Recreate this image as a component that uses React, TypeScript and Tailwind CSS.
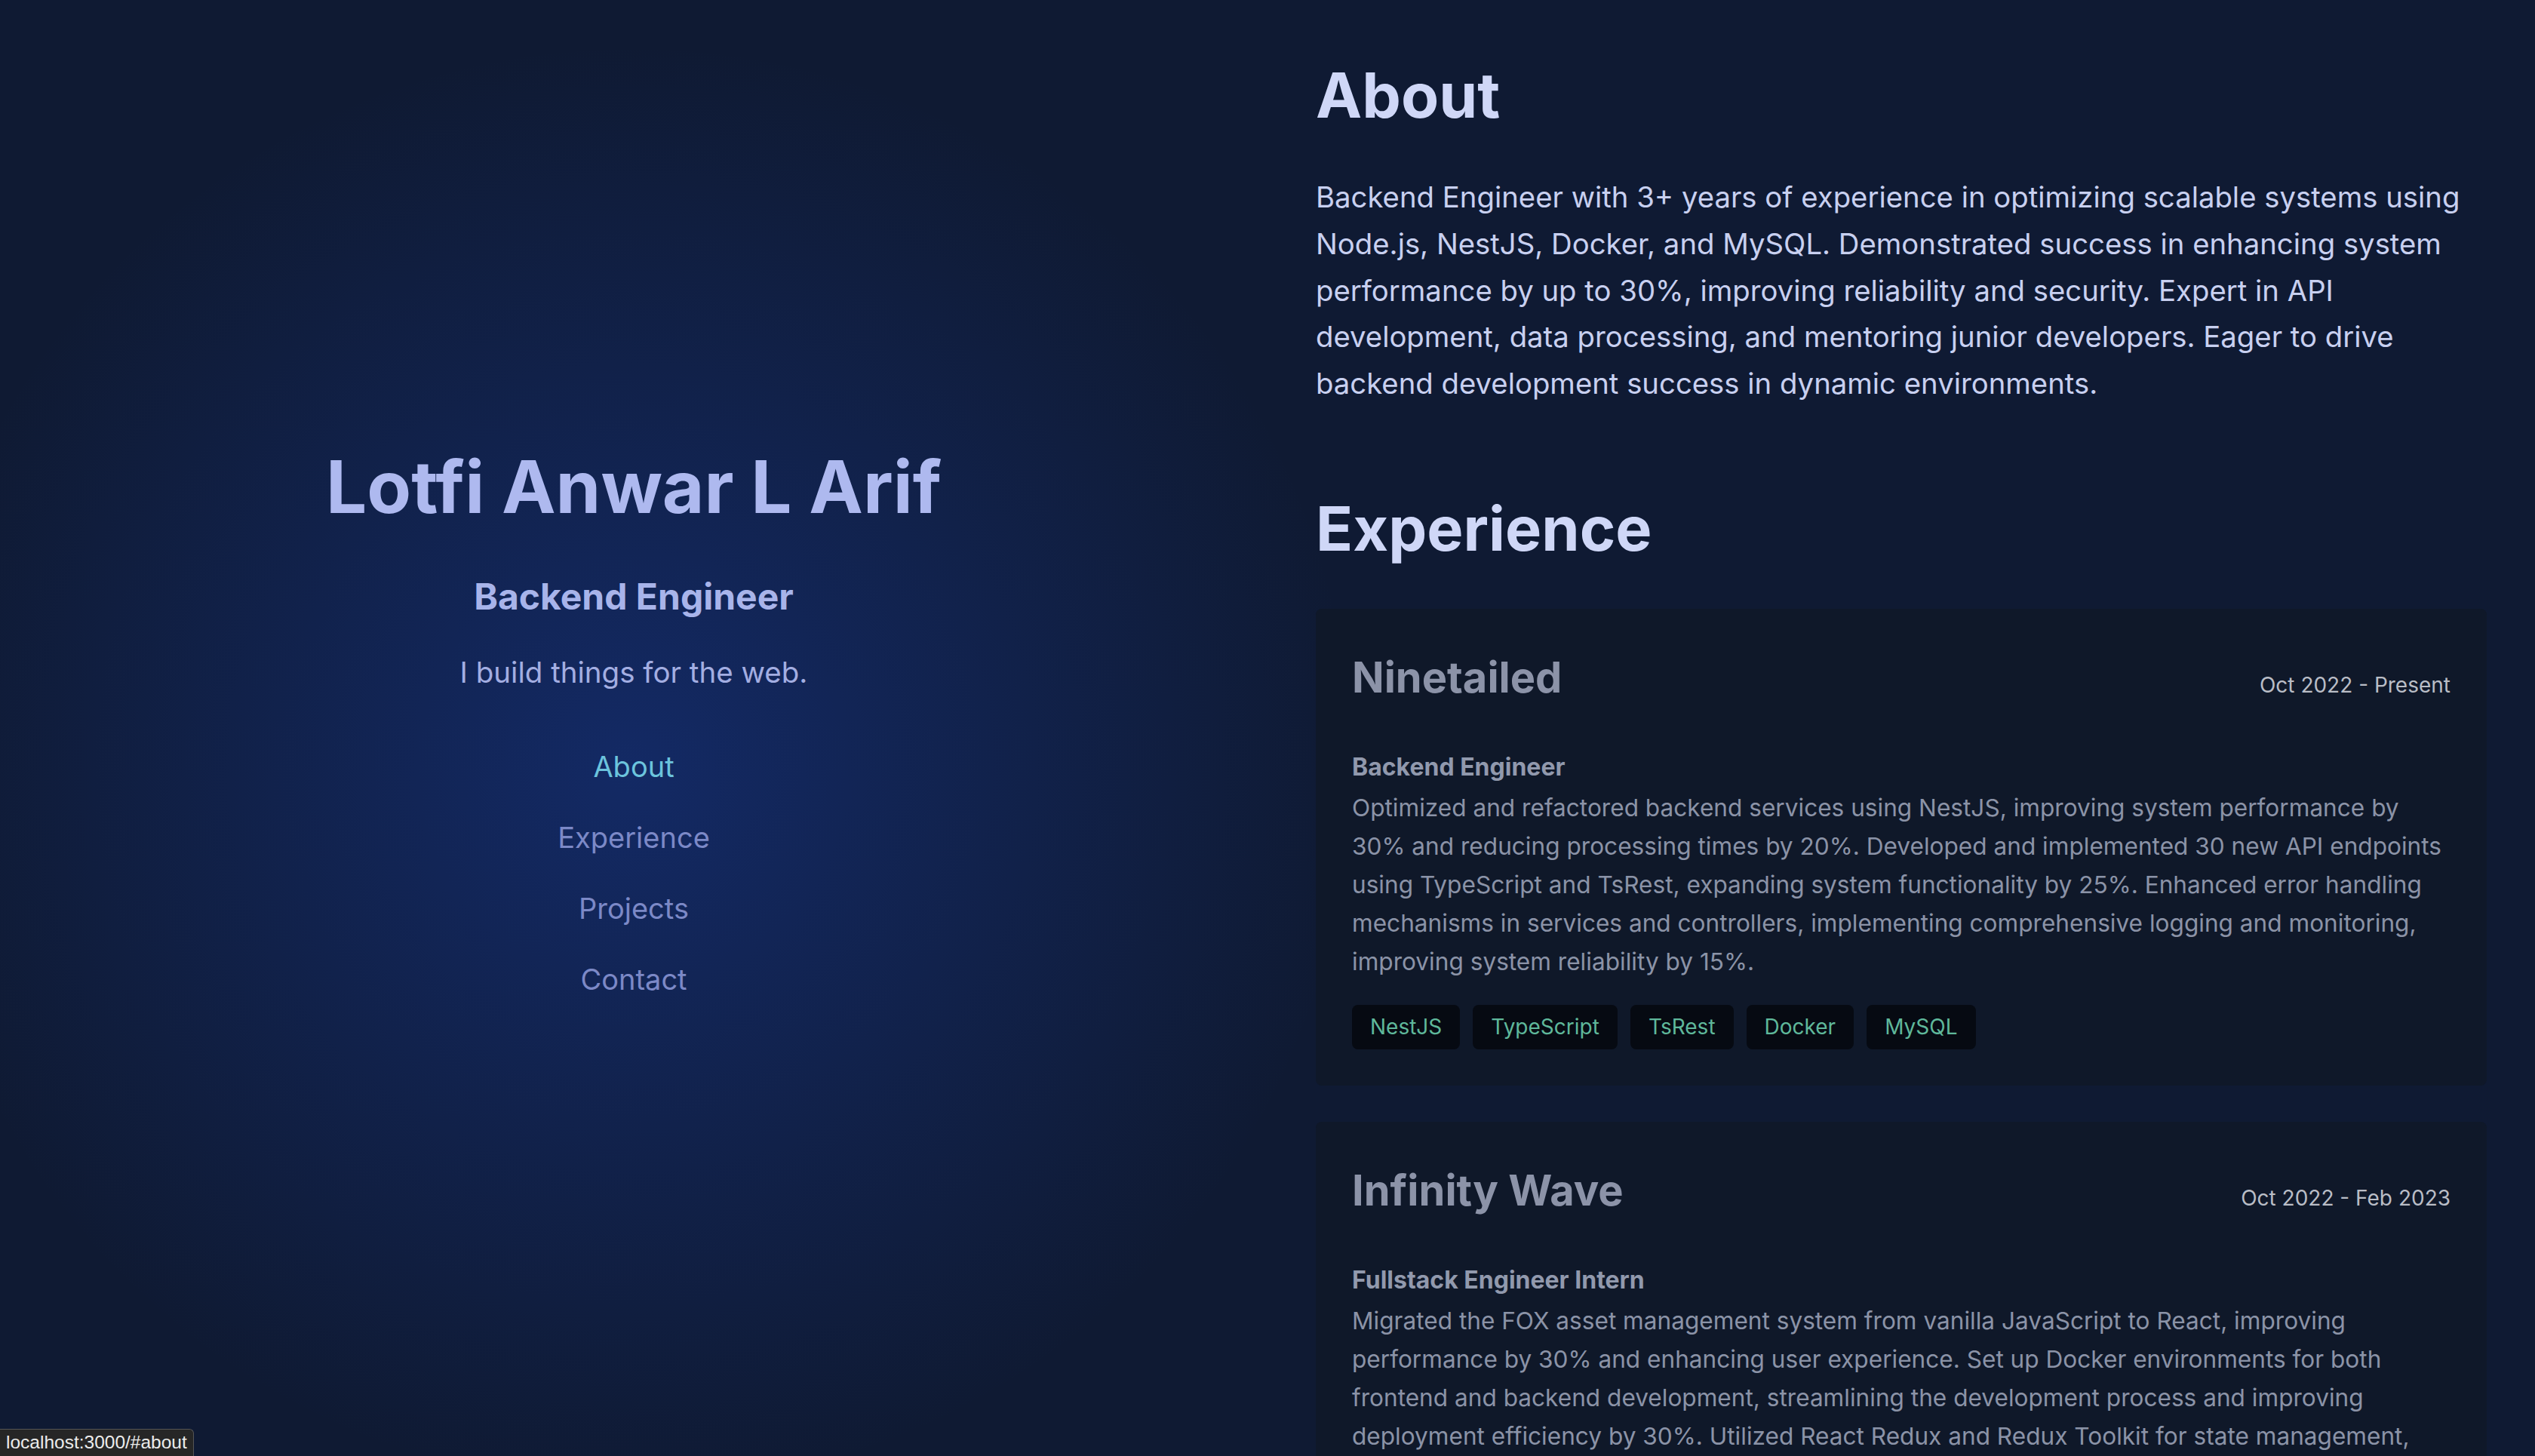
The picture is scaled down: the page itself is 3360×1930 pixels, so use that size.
import React from "react";

type Job = {
  company: string;
  period: string;
  role: string;
  summary: string;
  stack: string[];
};

const jobs: Job[] = [
  {
    company: "Ninetailed",
    period: "Oct 2022 - Present",
    role: "Backend Engineer",
    summary:
      "Optimized and refactored backend services using NestJS, improving system performance by 30% and reducing processing times by 20%. Developed and implemented 30 new API endpoints using TypeScript and TsRest, expanding system functionality by 25%. Enhanced error handling mechanisms in services and controllers, implementing comprehensive logging and monitoring, improving system reliability by 15%.",
    stack: ["NestJS", "TypeScript", "TsRest", "Docker", "MySQL"],
  },
  {
    company: "Infinity Wave",
    period: "Oct 2022 - Feb 2023",
    role: "Fullstack Engineer Intern",
    summary:
      "Migrated the FOX asset management system from vanilla JavaScript to React, improving performance by 30% and enhancing user experience. Set up Docker environments for both frontend and backend development, streamlining the development process and improving deployment efficiency by 30%. Utilized React Redux and Redux Toolkit for state management, ensuring predictable data flow across the application.",
    stack: ["React", "Redux", "Docker", "JavaScript"],
  },
];

const navItems = ["About", "Experience", "Projects", "Contact"];

const JobCard: React.FC<{ job: Job }> = ({ job }) => {
  return (
    <div className="rounded-lg bg-[#0f1829] px-[48px] pt-[55px] pb-[48px]">
      <div className="flex items-baseline justify-between">
        <h3 className="text-[56px] leading-[72px] font-bold text-[#8c93a8]">
          {job.company}
        </h3>
        <span className="text-[28px] text-[#b9bdc6]">{job.period}</span>
      </div>
      <h4 className="mt-[57px] text-[32px] leading-[51px] font-bold text-[#9199ad]">
        {job.role}
      </h4>
      <p className="mt-[3px] text-[31.6px] leading-[51px] text-[#8b93a7]">
        {job.summary}
      </p>
      <div className="mt-[32px] flex gap-[17px]">
        {job.stack.map((tech) => (
          <span
            key={tech}
            className="flex h-[59px] items-center rounded-lg bg-[#060a12] px-[24px] text-[28px] text-[#5fb89b]"
          >
            {tech}
          </span>
        ))}
      </div>
    </div>
  );
};

export default function App() {
  return (
    <div className="relative h-[1930px] w-full overflow-hidden bg-[#0f1a33] bg-[radial-gradient(1200px_at_838px_1018px,rgba(29,78,216,0.3),transparent_80%)] font-['Inter',sans-serif]">
      <div className="grid h-full grid-cols-2">
        {/* left side */}
        <header className="flex flex-col items-center justify-center pb-[8px]">
          <h1 className="text-[96px] leading-[100px] font-bold text-[#aeb9ef]">
            Lotfi Anwar L Arif
          </h1>
          <h2 className="mt-[64px] text-[48px] leading-[64px] font-bold text-[#a8b4ea]">
            Backend Engineer
          </h2>
          <p className="mt-[38px] text-[38.5px] leading-[60px] text-[#a3aee2]">
            I build things for the web.
          </p>
          <nav className="mt-[65px] flex flex-col items-center gap-[34px]">
            {navItems.map((item) => (
              <a
                key={item}
                href={`#${item.toLowerCase()}`}
                className={
                  item === "About"
                    ? "text-[38px] leading-[60px] text-[#6cc4dd]"
                    : "text-[38px] leading-[60px] text-[#7c89c7]"
                }
              >
                {item}
              </a>
            ))}
          </nav>
        </header>

        {/* right side */}
        <main className="overflow-hidden px-[64px] pt-[78px]">
          <section id="about">
            <h2 className="text-[82px] leading-[98px] font-bold text-[#cfd7f7]">
              About
            </h2>
            <p className="mt-[55px] text-[38.3px] leading-[61.75px] text-[#c8d0f0]">
              Backend Engineer with 3+ years of experience in optimizing scalable
              systems using Node.js, NestJS, Docker, and MySQL. Demonstrated
              success in enhancing system performance by up to 30%, improving
              reliability and security. Expert in API development, data
              processing, and mentoring junior developers. Eager to drive backend
              development success in dynamic environments.
            </p>
          </section>

          <section id="experience" className="mt-[112px]">
            <h2 className="text-[81px] leading-[98px] font-bold text-[#cfd7f7]">
              Experience
            </h2>
            <div className="mt-[57px] flex flex-col gap-[48px]">
              {jobs.map((job) => (
                <JobCard key={job.company} job={job} />
              ))}
            </div>
          </section>
        </main>
      </div>

      {/* browser link preview */}
      <div className="absolute bottom-0 left-0 flex h-[36px] items-center rounded-tr-md border-t border-r border-[#555] bg-[#262626] px-[8px] font-['Liberation_Sans',sans-serif] text-[24.5px] text-[#ececec]">
        localhost:3000/#about
      </div>
    </div>
  );
}
